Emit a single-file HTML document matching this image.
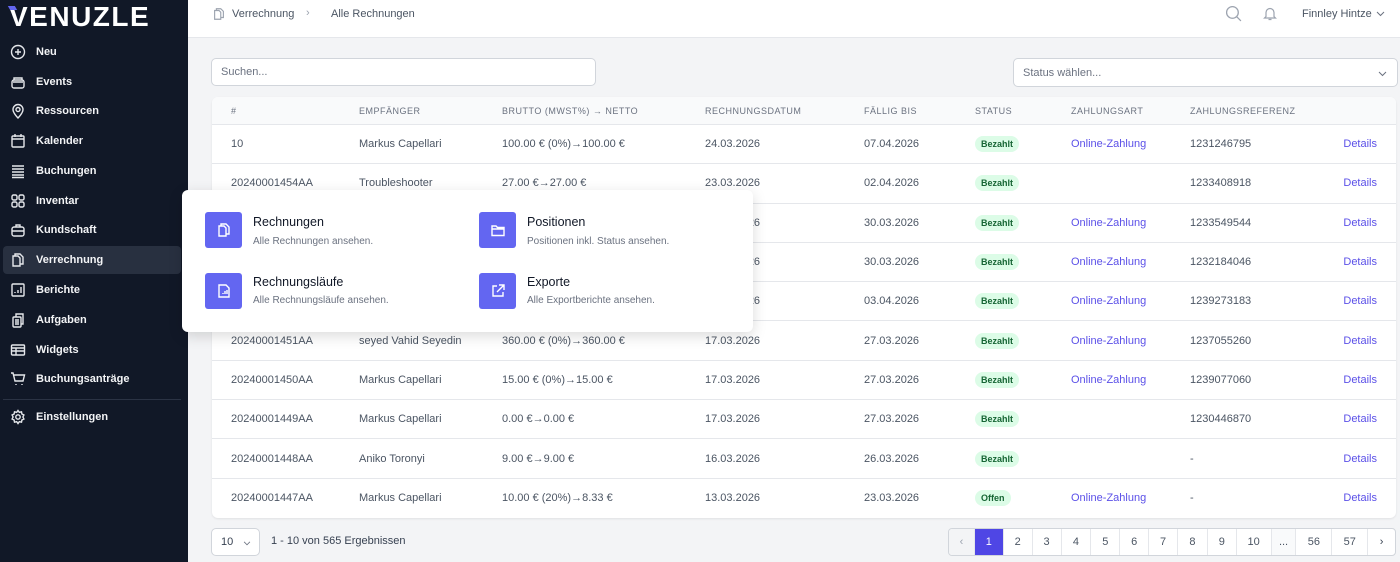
<!DOCTYPE html>
<html><head><meta charset="utf-8"><style>
*{box-sizing:border-box;margin:0;padding:0}
body{width:1400px;height:562px;overflow:hidden;font-family:"Liberation Sans",sans-serif;background:#f3f4f6;position:relative;color:#4b5563}
.sb{position:absolute;left:0;top:0;width:188px;height:562px;background:#111827;color:#f3f4f6}
.logo{position:absolute;left:9px;top:1px;font-size:28px;line-height:32px;font-weight:bold;letter-spacing:1.5px;color:#fff}
.logo i{position:absolute;left:0;top:5px;width:7px;height:4px;background:#6366f1;transform:skewX(30deg)}
.it{position:absolute;left:3px;width:178px;height:28px;font-size:11px;font-weight:bold;display:flex;align-items:center;padding-left:33px;border-radius:4px}
.it svg{position:absolute;left:7px;top:6px;width:16px;height:16px;fill:none;stroke:#e5e7eb;stroke-width:1.4}
.act{background:#283040}
.hd{position:absolute;left:188px;top:0;right:0;height:38px;background:#fff;border-bottom:1px solid #e5e7eb;font-size:11px;color:#4b5563}
.inp{position:absolute;background:#fff;border:1px solid #d1d5db;border-radius:5px;font-size:11px;color:#6b7280;padding-left:9px;display:flex;align-items:center}
.tb{position:absolute;left:212px;top:97px;width:1184px;height:421px;background:#fff;border-radius:6px;box-shadow:0 1px 2px rgba(0,0,0,.08);overflow:hidden}
.th{height:28px;background:#f9fafb;border-bottom:1px solid #e5e7eb;position:relative;font-size:9px;letter-spacing:.5px;color:#6b7280}
.tr{height:39.3px;border-bottom:1px solid #e5e7eb;position:relative;font-size:11px;color:#4b5563}
.c{position:absolute;top:50%;transform:translateY(-50%);white-space:nowrap}
.b{font-size:9px;font-weight:bold;padding:3px 6px;border-radius:8px;background:#dcfce7;color:#166534}
.l{color:#5b50e8}
.pop{position:absolute;left:182px;top:190px;width:571px;height:142px;background:#fff;border-radius:6px;box-shadow:0 4px 14px rgba(0,0,0,.15)}
.pi{position:absolute;width:37px;height:36px;background:#6366f1;border-radius:3px}
.pi svg{position:absolute;left:11px;top:10px;width:16px;height:16px;fill:none;stroke:#fff;stroke-width:1.4}
.pt{position:absolute;font-size:12.5px;color:#111827}
.ps{position:absolute;font-size:10px;color:#6b7280}
.pg{position:absolute;top:528px;height:28px;display:flex;border:1px solid #d1d5db;border-radius:4px;overflow:hidden;left:948px;width:448px;background:#fff}
.pg div{border-right:1px solid #e5e7eb;display:flex;align-items:center;justify-content:center;font-size:11px;color:#4b5563}
</style></head><body>
<div class="sb">
<div class="logo"><i></i>VENUZLE</div>
<div class="it" style="top:38px"><svg viewBox="0 0 16 16"><circle cx="8" cy="8" r="6.5"/><path d="M8 5v6M5 8h6"/></svg>Neu</div>
<div class="it" style="top:68px"><svg viewBox="0 0 16 16"><rect x="2" y="6" width="12" height="8" rx="2"/><path d="M4 6V4h8v2M3 8h10"/></svg>Events</div>
<div class="it" style="top:97px"><svg viewBox="0 0 16 16"><path d="M8 15s5-5 5-8.5a5 5 0 0 0-10 0C3 10 8 15 8 15z"/><circle cx="8" cy="6.5" r="2"/></svg>Ressourcen</div>
<div class="it" style="top:127px"><svg viewBox="0 0 16 16"><rect x="2" y="3" width="12" height="11" rx="1"/><path d="M5 1v3M11 1v3M2 6h12"/></svg>Kalender</div>
<div class="it" style="top:157px"><svg viewBox="0 0 16 16"><path d="M2 3h12M2 6h12M2 9h12M2 12h12M2 14.5h12"/></svg>Buchungen</div>
<div class="it" style="top:187px"><svg viewBox="0 0 16 16"><rect x="2" y="2" width="5" height="5" rx="1.5"/><rect x="9" y="2" width="5" height="5" rx="1.5"/><rect x="2" y="9" width="5" height="5" rx="1.5"/><rect x="9" y="9" width="5" height="5" rx="1.5"/></svg>Inventar</div>
<div class="it" style="top:216px"><svg viewBox="0 0 16 16"><rect x="2" y="5" width="12" height="9" rx="2"/><path d="M6 5V3h4v2M2 9h12"/></svg>Kundschaft</div>
<div class="it act" style="top:246px"><svg viewBox="0 0 16 16"><path d="M5 4V2h5l3 3v7h-3M3 4h5l2 2v8H3z"/></svg>Verrechnung</div>
<div class="it" style="top:276px"><svg viewBox="0 0 16 16"><rect x="2" y="2" width="12" height="12" rx="1"/><path d="M5 11v-1M8 11V8M11 11V5"/></svg>Berichte</div>
<div class="it" style="top:306px"><svg viewBox="0 0 16 16"><rect x="3" y="5" width="8" height="10" rx="1"/><path d="M6 5V2h7v10h-2M5 8h4M5 10h4M5 12h4"/></svg>Aufgaben</div>
<div class="it" style="top:336px"><svg viewBox="0 0 16 16"><rect x="1.5" y="3" width="13" height="10" rx="1"/><path d="M1.5 6h13M1.5 9h13M6 6v7"/></svg>Widgets</div>
<div class="it" style="top:365px"><svg viewBox="0 0 16 16"><path d="M1 2h2l2 8h8l1.5-6H4M6 13v1M12 13v1"/></svg>Buchungsanträge</div>
<div style="position:absolute;left:3px;top:399px;width:178px;height:1px;background:#2b3344"></div>
<div class="it" style="top:403px"><svg viewBox="0 0 16 16"><circle cx="8" cy="8" r="2.2"/><path d="M8 1.5l1.3 1.8 2.2-.5.4 2.2 2 1-1 2 1 2-2 1-.4 2.2-2.2-.5L8 14.5l-1.3-1.8-2.2.5-.4-2.2-2-1 1-2-1-2 2-1 .4-2.2 2.2.5z"/></svg>Einstellungen</div>
</div>
<div class="hd">
<svg style="position:absolute;left:24px;top:7px" width="14" height="14" viewBox="0 0 16 16" fill="none" stroke="#9ca3af" stroke-width="1.3"><path d="M5 4V2h5l3 3v7h-3M3 4h5l2 2v8H3z"/></svg>
<span style="position:absolute;left:44px;top:8px">Verrechnung</span>
<span style="position:absolute;left:118px;top:7px;color:#9ca3af">›</span>
<span style="position:absolute;left:143px;top:8px">Alle Rechnungen</span>
<svg style="position:absolute;left:1037px;top:5px" width="17" height="17" viewBox="0 0 16 16" fill="none" stroke="#9ca3af" stroke-width="1.2"><circle cx="7" cy="7" r="5.5"/><path d="M11 11l4 4"/></svg>
<svg style="position:absolute;left:1074px;top:5px" width="16" height="17" viewBox="0 0 16 16" fill="none" stroke="#9ca3af" stroke-width="1.2"><path d="M4 11V7a4 4 0 0 1 8 0v4l1.5 1.5h-11zM6.5 14h3"/></svg>
<span style="position:absolute;left:1114px;top:8px">Finnley Hintze</span>
<svg style="position:absolute;left:1188px;top:11px" width="9" height="6" viewBox="0 0 9 6" fill="none" stroke="#6b7280"><path d="M1 1l3.5 3.5L8 1"/></svg>
</div>
<div class="inp" style="left:211px;top:58px;width:385px;height:28px">Suchen...</div>
<div class="inp" style="left:1013px;top:58px;width:385px;height:29px">Status wählen...<svg style="position:absolute;right:10px;top:12px" width="9" height="6" viewBox="0 0 9 6" fill="none" stroke="#6b7280"><path d="M1 1l3.5 3.5L8 1"/></svg></div>
<div class="tb">
<div class="th"><span class="c" style="left:19px">#</span><span class="c" style="left:147px">EMPFÄNGER</span><span class="c" style="left:290px">BRUTTO (MWST%) → NETTO</span><span class="c" style="left:493px">RECHNUNGSDATUM</span><span class="c" style="left:652px">FÄLLIG BIS</span><span class="c" style="left:763px">STATUS</span><span class="c" style="left:859px">ZAHLUNGSART</span><span class="c" style="left:978px">ZAHLUNGSREFERENZ</span></div>
<div class="tr"><span class="c" style="left:19px">10</span><span class="c" style="left:147px">Markus Capellari</span><span class="c" style="left:290px">100.00 € (0%)→100.00 €</span><span class="c" style="left:493px">24.03.2026</span><span class="c" style="left:652px">07.04.2026</span><span class="c b" style="left:763px">Bezahlt</span><span class="c l" style="left:859px">Online-Zahlung</span><span class="c" style="left:978px">1231246795</span><span class="c l" style="right:19px">Details</span></div>
<div class="tr"><span class="c" style="left:19px">20240001454AA</span><span class="c" style="left:147px">Troubleshooter</span><span class="c" style="left:290px">27.00 €→27.00 €</span><span class="c" style="left:493px">23.03.2026</span><span class="c" style="left:652px">02.04.2026</span><span class="c b" style="left:763px">Bezahlt</span><span class="c" style="left:978px">1233408918</span><span class="c l" style="right:19px">Details</span></div>
<div class="tr"><span class="c" style="left:493px">23.03.2026</span><span class="c" style="left:652px">30.03.2026</span><span class="c b" style="left:763px">Bezahlt</span><span class="c l" style="left:859px">Online-Zahlung</span><span class="c" style="left:978px">1233549544</span><span class="c l" style="right:19px">Details</span></div>
<div class="tr"><span class="c" style="left:493px">23.03.2026</span><span class="c" style="left:652px">30.03.2026</span><span class="c b" style="left:763px">Bezahlt</span><span class="c l" style="left:859px">Online-Zahlung</span><span class="c" style="left:978px">1232184046</span><span class="c l" style="right:19px">Details</span></div>
<div class="tr"><span class="c" style="left:493px">20.03.2026</span><span class="c" style="left:652px">03.04.2026</span><span class="c b" style="left:763px">Bezahlt</span><span class="c l" style="left:859px">Online-Zahlung</span><span class="c" style="left:978px">1239273183</span><span class="c l" style="right:19px">Details</span></div>
<div class="tr"><span class="c" style="left:19px">20240001451AA</span><span class="c" style="left:147px">seyed Vahid Seyedin</span><span class="c" style="left:290px">360.00 € (0%)→360.00 €</span><span class="c" style="left:493px">17.03.2026</span><span class="c" style="left:652px">27.03.2026</span><span class="c b" style="left:763px">Bezahlt</span><span class="c l" style="left:859px">Online-Zahlung</span><span class="c" style="left:978px">1237055260</span><span class="c l" style="right:19px">Details</span></div>
<div class="tr"><span class="c" style="left:19px">20240001450AA</span><span class="c" style="left:147px">Markus Capellari</span><span class="c" style="left:290px">15.00 € (0%)→15.00 €</span><span class="c" style="left:493px">17.03.2026</span><span class="c" style="left:652px">27.03.2026</span><span class="c b" style="left:763px">Bezahlt</span><span class="c l" style="left:859px">Online-Zahlung</span><span class="c" style="left:978px">1239077060</span><span class="c l" style="right:19px">Details</span></div>
<div class="tr"><span class="c" style="left:19px">20240001449AA</span><span class="c" style="left:147px">Markus Capellari</span><span class="c" style="left:290px">0.00 €→0.00 €</span><span class="c" style="left:493px">17.03.2026</span><span class="c" style="left:652px">27.03.2026</span><span class="c b" style="left:763px">Bezahlt</span><span class="c" style="left:978px">1230446870</span><span class="c l" style="right:19px">Details</span></div>
<div class="tr"><span class="c" style="left:19px">20240001448AA</span><span class="c" style="left:147px">Aniko Toronyi</span><span class="c" style="left:290px">9.00 €→9.00 €</span><span class="c" style="left:493px">16.03.2026</span><span class="c" style="left:652px">26.03.2026</span><span class="c b" style="left:763px">Bezahlt</span><span class="c" style="left:978px">-</span><span class="c l" style="right:19px">Details</span></div>
<div class="tr" style="border:0"><span class="c" style="left:19px">20240001447AA</span><span class="c" style="left:147px">Markus Capellari</span><span class="c" style="left:290px">10.00 € (20%)→8.33 €</span><span class="c" style="left:493px">13.03.2026</span><span class="c" style="left:652px">23.03.2026</span><span class="c b" style="left:763px">Offen</span><span class="c l" style="left:859px">Online-Zahlung</span><span class="c" style="left:978px">-</span><span class="c l" style="right:19px">Details</span></div>
</div>
<div class="pop">
<div class="pi" style="left:23px;top:22px"><svg viewBox="0 0 16 16"><path d="M5 4V2h5l3 3v7h-3M3 4h5l2 2v8H3z"/></svg></div>
<div class="pt" style="left:71px;top:25px">Rechnungen</div><div class="ps" style="left:71px;top:46px">Alle Rechnungen ansehen.</div>
<div class="pi" style="left:297px;top:22px"><svg viewBox="0 0 16 16"><path d="M2 4h4l1.5 1.5H14v8H2zM2 7h12"/></svg></div>
<div class="pt" style="left:345px;top:25px">Positionen</div><div class="ps" style="left:345px;top:46px">Positionen inkl. Status ansehen.</div>
<div class="pi" style="left:23px;top:83px"><svg viewBox="0 0 16 16"><path d="M3 2h7l3 3v9H3zM7 11v-1M9 11V8M11 11V7"/></svg></div>
<div class="pt" style="left:71px;top:85px">Rechnungsläufe</div><div class="ps" style="left:71px;top:105px">Alle Rechnungsläufe ansehen.</div>
<div class="pi" style="left:297px;top:83px"><svg viewBox="0 0 16 16"><path d="M7 3H3v10h10V9M9 2h5v5M14 2L7 9"/></svg></div>
<div class="pt" style="left:345px;top:85px">Exporte</div><div class="ps" style="left:345px;top:105px">Alle Exportberichte ansehen.</div>
</div>
<div class="inp" style="left:211px;top:528px;width:49px;height:28px;color:#374151">10<svg style="position:absolute;left:31px;top:12px" width="8" height="5" viewBox="0 0 9 6" fill="none" stroke="#6b7280"><path d="M1 1l3.5 3.5L8 1"/></svg></div>
<span style="position:absolute;left:271px;top:535px;font-size:11px;color:#374151">1 - 10 von 565 Ergebnissen</span>
<div class="pg">
<div style="width:26px;background:#f3f4f6;color:#9ca3af">‹</div>
<div style="width:29px;background:#4f46e5;color:#fff">1</div>
<div style="width:29px">2</div><div style="width:29px">3</div><div style="width:30px">4</div><div style="width:29px">5</div><div style="width:29px">6</div><div style="width:29px">7</div><div style="width:30px">8</div><div style="width:29px">9</div>
<div style="width:35px">10</div><div style="width:25px;background:#f9fafb">...</div><div style="width:36px">56</div><div style="width:36px">57</div>
<div style="width:27px;border:0;color:#374151">›</div>
</div>
</body></html>
